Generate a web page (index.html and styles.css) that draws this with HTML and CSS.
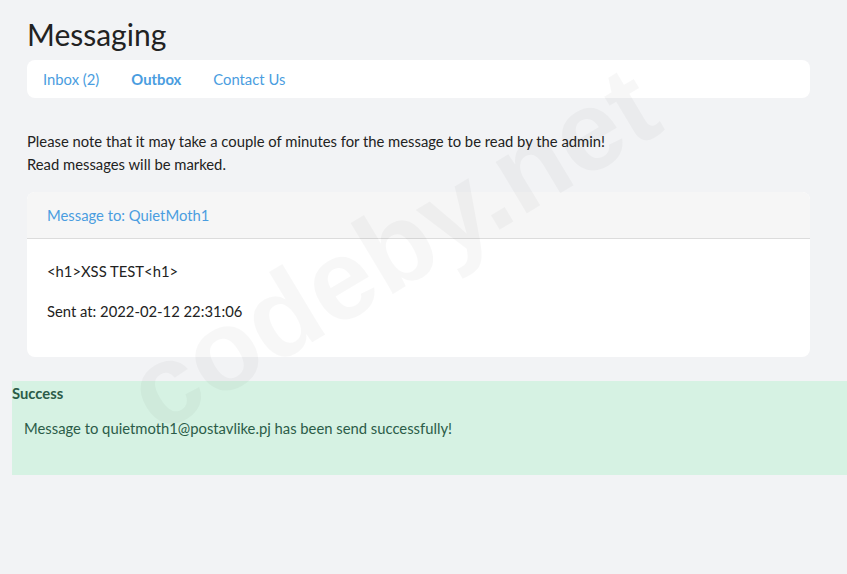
FILE: index.html
```html
<!DOCTYPE html>
<html lang="en">
<head>
  <meta charset="UTF-8">
  <meta name="viewport" content="width=device-width, initial-scale=1.0">
  <title>Messaging</title>
  <link rel="stylesheet" href="styles.css">
</head>
<body>
  <div class="container">
    <h1>Messaging</h1>
    <nav class="tabs">
      <a href="#">Inbox (2)</a>
      <a href="#" class="active">Outbox</a>
      <a href="#">Contact Us</a>
    </nav>

    <p class="note">Please note that it may take a couple of minutes for the message to be read by the admin!<br>Read messages will be marked.</p>

    <div class="card">
      <div class="card-head"><a href="#">Message to: QuietMoth1</a></div>
      <div class="card-body">
        <p>&lt;h1&gt;XSS TEST&lt;h1&gt;</p>
        <p>Sent at: 2022-02-12 22:31:06</p>
      </div>
    </div>
  </div>

  <div class="alert">
    <strong>Success</strong>
    <p>Message to quietmoth1@postavlike.pj has been send successfully!</p>
  </div>

  <div class="watermark">codeby.net</div>
</body>
</html>
```
FILE: styles.css
```css
body { margin: 0; background: #f2f3f5; font-family: Lato, "Noto Sans", sans-serif; color: #222; overflow: hidden; }
.container { padding: 0 37px 0 27px; }
h1 { font-weight: 400; font-size: 30px; margin: 0; padding: 16px 0 8px; line-height: 36px; color: #222; }
.tabs { display: flex; background: #fff; border-radius: 8px; height: 38px; align-items: center; padding: 0 16px; gap: 32px; }
.tabs a { color: #4a9de0; text-decoration: none; font-size: 14.8px; }
.tabs a.active { font-weight: 700; }
.note { margin: 32px 0 16px; font-size: 14.8px; line-height: 23px; }
.card { background: #fff; border-radius: 8px; overflow: hidden; }
.card-head { background: #f6f6f6; border-bottom: 1px solid #dcdcdc; height: 46px; display: flex; align-items: center; padding: 0 20px; }
.card-head a { color: #4a9de0; text-decoration: none; font-size: 14.8px; }
.card-body { padding: 22px 20px 36px; }
.card-body p { margin: 0 0 20px; font-size: 14.8px; line-height: 20px; }
.card-body p:last-child { margin-bottom: 0; }
.alert { margin: 24px 0 0 12px; background: #d6f2e3; color: #2b5c48; height: 94px; font-size: 14.8px; }
.alert strong { display: block; padding-top: 3px; line-height: 18px; }
.alert p { margin: 16px 0 0 12px; line-height: 20px; }
.watermark { position: absolute; left: 104px; top: 345px; font-family: "Liberation Sans", Arial, sans-serif; font-weight: 700; font-size: 114px; color: rgba(0, 0, 0, 0.033); transform: rotate(-31deg); transform-origin: left top; pointer-events: none; white-space: nowrap; }
```
